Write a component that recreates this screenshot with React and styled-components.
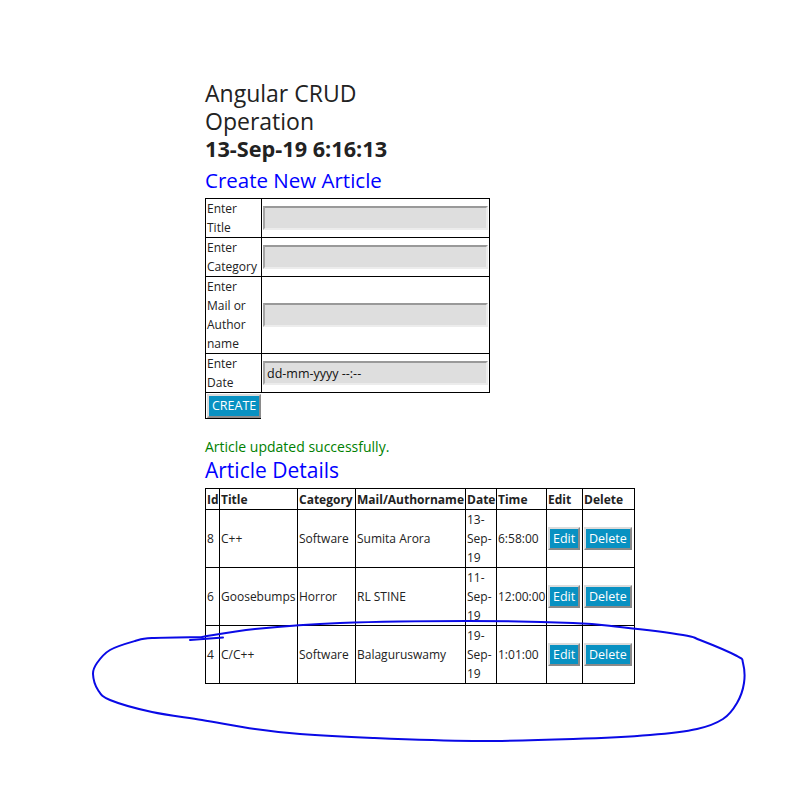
import React from 'react'
import styled, { createGlobalStyle } from 'styled-components'

const GlobalStyle = createGlobalStyle`
  body {
    margin: 0;
    background: #fff;
    color: #222;
    font-family: "Open Sans", "Noto Sans", sans-serif;
    font-size: 12px;
    line-height: 19px;
  }
`

const Page = styled.div`
  position: relative;
  min-height: 804px;
  box-sizing: border-box;
  padding: 79px 0 0 205px;
`

const Title = styled.h1`
  width: 200px;
  margin: 0;
  font-size: 23px;
  font-weight: 400;
  line-height: 28px;
`

const Stamp = styled.div`
  font-size: 21.7px;
  font-weight: 700;
  line-height: 28px;
`

const SectionHeading = styled.h2`
  margin: ${p => p.$top}px 0 ${p => p.$bottom}px;
  color: #0000ff;
  font-size: ${p => p.$size}px;
  font-weight: 400;
  line-height: 23px;
`

const FormTable = styled.table`
  width: 285px;
  border-collapse: collapse;

  td {
    border: 1px solid #000;
    padding: 0 1px;
    vertical-align: middle;
  }
`

const LabelCell = styled.td`
  width: 53px;
`

const Field = styled.input`
  display: block;
  width: 225px;
  height: 24px;
  box-sizing: border-box;
  margin: 0;
  padding: 0 2px;
  background: #dedede;
  border-style: solid;
  border-width: 2px;
  border-color: #999 #ececec #ececec #a5a5a5;
  font-family: inherit;
  font-size: 12.5px;
  color: #111;
  outline: none;
`

const CreateCell = styled.div`
  width: 54px;
  padding: 1px 0 0 1px;
  border-left: 1px solid #000;
  border-bottom: 1px solid #000;
`

const BlueButton = styled.button`
  margin: 0;
  padding: 0 ${p => p.$pad}px;
  height: ${p => p.$h}px;
  background: #0891c2;
  border-style: solid;
  border-width: 2px;
  border-color: #dcdcdc #8a8a8a #8a8a8a #dcdcdc;
  color: #fff;
  font-family: inherit;
  font-size: 12.5px;
  line-height: 18px;
  cursor: pointer;
`

const Message = styled.div`
  margin-top: 18px;
  color: #008000;
  font-size: 14px;
  line-height: 20px;
`

const DetailsTable = styled.table`
  width: 429px;
  table-layout: fixed;
  border-collapse: collapse;

  th, td {
    border: 1px solid #000;
    padding: 0 1px;
    text-align: left;
    vertical-align: middle;
  }

  th {
    padding: 1px 1px 0;
    font-weight: 700;
    white-space: nowrap;
  }
`

const Col = styled.col`
  width: ${p => p.$w}px;
`

const Annotation = styled.svg`
  position: absolute;
  top: 0;
  left: 0;
  pointer-events: none;
`

const articles = [
  { id: 8, title: 'C++', category: 'Software', author: 'Sumita Arora', date: '13-Sep-19', time: '6:58:00' },
  { id: 6, title: 'Goosebumps', category: 'Horror', author: 'RL STINE', date: '11-Sep-19', time: '12:00:00' },
  { id: 4, title: 'C/C++', category: 'Software', author: 'Balaguruswamy', date: '19-Sep-19', time: '1:01:00' },
]

const widths = [14, 78, 58, 110, 31, 50, 36, 52]

// hand drawn loop around the last row
const loop = [
  [202, 637], [152, 638], [135, 641], [110, 650], [97, 663], [93, 674], [98, 690], [110, 700],
  [152, 712], [202, 720], [255, 729], [300, 734], [373, 738], [473, 741], [573, 739], [650, 735],
  [697, 729], [723, 719], [737, 703], [744, 683], [743, 663], [737, 656], [700, 640], [683, 635],
  [620, 627], [573, 623], [467, 621], [340, 623], [255, 629], [202, 637],
]

function smooth (pts) {
  let d = `M${pts[0][0]},${pts[0][1]}`
  for (let i = 0; i < pts.length - 1; i++) {
    const p0 = pts[i - 1] || pts[i]
    const p1 = pts[i]
    const p2 = pts[i + 1]
    const p3 = pts[i + 2] || p2
    const c1 = [p1[0] + (p2[0] - p0[0]) / 6, p1[1] + (p2[1] - p0[1]) / 6]
    const c2 = [p2[0] - (p3[0] - p1[0]) / 6, p2[1] - (p3[1] - p1[1]) / 6]
    d += ` C${c1[0].toFixed(1)},${c1[1].toFixed(1)} ${c2[0].toFixed(1)},${c2[1].toFixed(1)} ${p2[0]},${p2[1]}`
  }
  return d
}

export default function App () {
  return (
    <>
      <GlobalStyle />
      <Page>
        <Title>Angular CRUD Operation</Title>
        <Stamp>13-Sep-19 6:16:13</Stamp>
        <SectionHeading $size={20.5} $top={6} $bottom={6}>Create New Article</SectionHeading>

        <FormTable>
          <tbody>
            <tr>
              <LabelCell>Enter Title</LabelCell>
              <td><Field type="text" /></td>
            </tr>
            <tr>
              <LabelCell>Enter Category</LabelCell>
              <td><Field type="text" /></td>
            </tr>
            <tr>
              <LabelCell>Enter Mail or Author name</LabelCell>
              <td><Field type="text" /></td>
            </tr>
            <tr>
              <LabelCell>Enter Date</LabelCell>
              <td><Field type="text" defaultValue="dd-mm-yyyy --:--" readOnly /></td>
            </tr>
          </tbody>
        </FormTable>
        <CreateCell>
          <BlueButton $pad={3} $h={24}>CREATE</BlueButton>
        </CreateCell>

        <Message>Article updated successfully.</Message>
        <SectionHeading $size={21} $top={2} $bottom={6}>Article Details</SectionHeading>

        <DetailsTable>
          <colgroup>
            {widths.map((w, i) => <Col key={i} $w={w} />)}
          </colgroup>
          <thead>
            <tr>
              <th>Id</th>
              <th>Title</th>
              <th>Category</th>
              <th>Mail/Authorname</th>
              <th>Date</th>
              <th>Time</th>
              <th>Edit</th>
              <th>Delete</th>
            </tr>
          </thead>
          <tbody>
            {articles.map(a => (
              <tr key={a.id}>
                <td>{a.id}</td>
                <td>{a.title}</td>
                <td>{a.category}</td>
                <td>{a.author}</td>
                <td>{a.date}</td>
                <td>{a.time}</td>
                <td><BlueButton $pad={3} $h={23}>Edit</BlueButton></td>
                <td><BlueButton $pad={3} $h={23}>Delete</BlueButton></td>
              </tr>
            ))}
          </tbody>
        </DetailsTable>

        <Annotation width="794" height="804" viewBox="0 0 794 804">
          <path d={smooth(loop)} fill="none" stroke="#0a0ae6" strokeWidth="2" strokeLinecap="round" strokeLinejoin="round" />
          <path d="M190,640 L223,637.5" fill="none" stroke="#0a0ae6" strokeWidth="2" strokeLinecap="round" />
        </Annotation>
      </Page>
    </>
  )
}
